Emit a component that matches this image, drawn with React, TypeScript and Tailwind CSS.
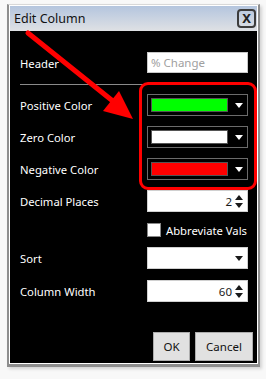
import React from 'react';

const Arrow = ({ dark }: { dark?: boolean }) => (
  <svg width="8" height="5" viewBox="0 0 8 5" className="shrink-0">
    <path d="M0 0H8L4 5Z" fill={dark ? '#1a1a1a' : '#ffffff'} />
  </svg>
);

const Spin = () => (
  <div className="flex flex-col items-center gap-[3px] w-[10px]">
    <svg width="8" height="5" viewBox="0 0 8 5"><path d="M0 5H8L4 0Z" fill="#1a1a1a" /></svg>
    <svg width="8" height="5" viewBox="0 0 8 5"><path d="M0 0H8L4 5Z" fill="#1a1a1a" /></svg>
  </div>
);

const Label = ({ children }: { children: React.ReactNode }) => (
  <div className="flex-1 text-white text-[11.25px] leading-none pt-[2px]">{children}</div>
);

const ColorPick = ({ color }: { color: string }) => (
  <div className="w-[101px] h-[22px] border border-[#6b6b6b] flex items-center pl-[3px] pr-[4px] gap-[7px]">
    <div className="w-[78px] h-[14px] border border-[#555]" style={{ backgroundColor: color }} />
    <Arrow />
  </div>
);

const SpinBox = ({ value }: { value: string }) => (
  <div className="w-[101px] h-[22px] bg-white border border-[#d0d0d0] flex items-center justify-end pr-[3px] gap-[2px] text-[11.5px] text-[#1a1a1a]">
    <span className="pt-px">{value}</span>
    <Spin />
  </div>
);

export default function App() {
  return (
    <div
      className="relative w-[266px] h-[379px] bg-[#f8f8f8] overflow-hidden"
      style={{ fontFamily: '"Noto Sans", "Open Sans", sans-serif' }}
    >
      <div className="ml-[7px] mt-[4px] w-[253px] border-x-2 border-t border-b-[3px] border-[#8e8e8e] border-t-[#d8d8d8] bg-white p-px shadow-[2px_2px_3px_rgba(0,0,0,0.15)]">
        {/* title bar */}
        <div className="h-[25px] bg-gradient-to-b from-[#b4c5de] to-[#dfe1e4] flex items-center justify-between pl-[4px] pr-[1px]">
          <span className="text-[12.5px] text-[#111] pt-px">Edit Column</span>
          <div className="w-[19px] h-[19px] border-2 border-[#3c3c3c] rounded-[4px] flex items-center justify-center text-[13px] font-bold text-[#222] leading-none">
            X
          </div>
        </div>

        {/* body */}
        <div className="bg-black h-[332px] flex flex-col pl-[10px] pr-[9px] pt-[21px]">
          <div className="flex items-center h-[21px]">
            <Label>Header</Label>
            <div className="w-[101px] h-[21px] bg-white border border-[#c8c8c8] flex items-center pl-[3px] text-[11.5px] text-[#a0a0a0]">
              % Change
            </div>
          </div>
          <div className="mt-[11px] h-px bg-[#8a8a8a]" />

          <div className="flex items-center h-[22px] mt-[9px]">
            <Label>Positive Color</Label>
            <ColorPick color="#00ff00" />
          </div>
          <div className="flex items-center h-[22px] mt-[10px]">
            <Label>Zero Color</Label>
            <ColorPick color="#ffffff" />
          </div>
          <div className="flex items-center h-[22px] mt-[10px]">
            <Label>Negative Color</Label>
            <ColorPick color="#ff0000" />
          </div>
          <div className="flex items-center h-[22px] mt-[10px]">
            <Label>Decimal Places</Label>
            <SpinBox value="2" />
          </div>

          <div className="flex items-center h-[14px] mt-[11px] pl-[127px] gap-[5px] whitespace-nowrap">
            <div className="w-[14px] h-[14px] shrink-0 bg-white border border-[#888]" />
            <span className="text-white text-[11.25px] leading-none pt-[2px]">Abbreviate Vals</span>
          </div>

          <div className="flex items-center h-[22px] mt-[10px]">
            <Label>Sort</Label>
            <div className="w-[101px] h-[22px] bg-white border border-[#d0d0d0] flex items-center justify-end pr-[4px]">
              <Arrow dark />
            </div>
          </div>
          <div className="flex items-center h-[22px] mt-[11px]">
            <Label>Column Width</Label>
            <SpinBox value="60" />
          </div>

          <div className="flex-1" />
          <div className="flex justify-end gap-[5px] mr-[-5px] mb-[2px]">
            <button className="w-[37px] h-[29px] bg-[#e1e1e1] border border-[#adadad] text-[11.5px] text-[#111]">OK</button>
            <button className="w-[58px] h-[29px] bg-[#e1e1e1] border border-[#adadad] text-[11.5px] text-[#111]">Cancel</button>
          </div>
        </div>
      </div>

      {/* annotation overlay */}
      <div className="absolute left-[139px] top-[82px] w-[118px] h-[108px] border-[3px] border-[#ff0000] rounded-[9px]" />
      <svg className="absolute left-0 top-0" width="266" height="379" viewBox="0 0 266 379">
        <line x1="28" y1="33" x2="114" y2="102" stroke="#ff0000" strokeWidth="5" strokeLinecap="round" />
        <path d="M133 119L103 111L119 91Z" fill="#ff0000" />
      </svg>
    </div>
  );
}
